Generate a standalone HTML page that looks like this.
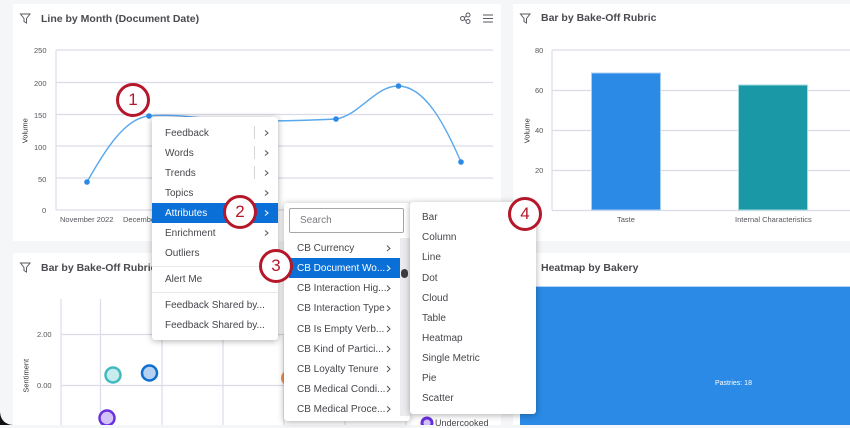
<!DOCTYPE html>
<html><head><meta charset="utf-8">
<style>
html,body{margin:0;padding:0}
body{width:850px;height:425px;overflow:hidden;background:#f5f6f8;position:relative;font-family:"Liberation Sans",sans-serif;color:#3f3f46}
#w{position:absolute;left:0;top:0;width:850px;height:425px;filter:blur(.35px)}
.card{position:absolute;background:#fff}
.t{position:absolute;white-space:nowrap;line-height:1}
.title{font-size:10.5px;font-weight:bold;color:#4a4a50;letter-spacing:0;margin-top:1px}
.ax{font-size:7.5px;color:#55555c;margin-top:1px}
.menu{position:absolute;background:#fff;border-radius:3px;box-shadow:0 1px 7px rgba(0,0,0,.32)}
.i{position:absolute;font-size:10px;color:#46464c;white-space:nowrap;line-height:1;margin-top:2px}
.blue{position:absolute;background:#0a6fd6}
.b{position:absolute;width:28px;height:28px;border:3px solid #b5172b;border-radius:50%;background:#fff;color:#b5172b;font-size:17px;line-height:28px;text-align:center}
svg{position:absolute;left:0;top:0}
</style></head><body><div id="w">
<div class="card" style="left:13px;top:4px;width:488px;height:237px"></div>
<div class="card" style="left:513px;top:4px;width:337px;height:237px"></div>
<div class="card" style="left:13px;top:253px;width:488px;height:172px"></div>
<div class="card" style="left:513px;top:253px;width:337px;height:172px"></div>
<svg width="850" height="425" viewBox="0 0 850 425" fill="none">
<g stroke="#dcdce9" stroke-width="1.2">
<path d="M56 50H493M56 82.500H493M56 114.500H493M56 146H493M56 178H493M56 210H493M56 50V210"/>
<path d="M552 50H850M552 90.500H850M552 130.500H850M552 170.500H850M552 210.500H850M552 50V210"/>
<path d="M61 334.500H501M61 385.500H501M61 299V425M100.500 299V425M162 334V425M223 334V425M284 334V425M345 334V425M406 334V425"/>
</g>
<path d="M87 182C105 150 125 118 149 116C180 113 210 121 260 121C290 121 315 120 336 119C360 115 375 86 398 86C425 86 445 125 461 162" stroke="#5aa8ee" stroke-width="1.4"/>
<g fill="#2a8ae6"><circle cx="87" cy="182" r="2.800"/><circle cx="149" cy="116" r="2.800"/><circle cx="336" cy="119" r="2.800"/><circle cx="398.500" cy="86" r="2.800"/><circle cx="461" cy="162" r="2.800"/></g>
<rect x="591.500" y="73" width="69" height="137" fill="#2a8ae6" stroke="#a8d0f5"/>
<rect x="738.500" y="85" width="69" height="125" fill="#1b98a6" stroke="#a5dbe0"/>
<circle cx="113" cy="375" r="7.500" fill="#c6ecec" stroke="#42b8c0" stroke-width="2.500"/>
<circle cx="149.500" cy="373" r="7.500" fill="#b5d2f2" stroke="#0f6fd0" stroke-width="2.500"/>
<circle cx="107" cy="418" r="7.500" fill="#d3c2f5" stroke="#6a2fe0" stroke-width="2.500"/>
<circle cx="289" cy="378" r="8" fill="#ee8f50"/>
<circle cx="427" cy="423" r="5" fill="#d3c2f5" stroke="#6a2fe0" stroke-width="3"/>
<g stroke="#5a5a60" stroke-width="1">
<path d="M20.500 14H30L26.500 18.500V23L24 21.500V18.500Z"/>
<path d="M520.500 14H530L526.500 18.500V23L524 21.500V18.500Z"/>
<path d="M20.500 263H30L26.500 267.500V272L24 270.500V267.500Z"/>
<circle cx="462.500" cy="18.500" r="2"/><circle cx="468" cy="15" r="2"/><circle cx="468" cy="21.500" r="2"/><path d="M464.300 17.500L466.200 16.400M464.300 19.500L466.200 20.600"/>
<path d="M483 15H493M483 18.500H493M483 22H493"/>
</g>
</svg>
<div class="t title" style="left:41px;top:13px">Line by Month (Document Date)</div>
<div class="t title" style="left:541px;top:12px">Bar by Bake-Off Rubric</div>
<div class="t title" style="left:41px;top:262px">Bar by Bake-Off Rubric</div>
<div class="t title" style="left:541px;top:262px">Heatmap by Bakery</div>
<div class="t ax" style="left:34px;top:46px">250</div><div class="t ax" style="left:34px;top:79px">200</div><div class="t ax" style="left:34px;top:111px">150</div><div class="t ax" style="left:34px;top:143px">100</div><div class="t ax" style="left:38px;top:175px">50</div><div class="t ax" style="left:42px;top:206px">0</div>
<div class="t ax" style="left:535px;top:46px">80</div><div class="t ax" style="left:535px;top:86px">60</div><div class="t ax" style="left:535px;top:126px">40</div><div class="t ax" style="left:535px;top:166px">20</div>
<div class="t ax" style="left:37px;top:330px">2.00</div><div class="t ax" style="left:37px;top:381px">0.00</div>
<div class="t ax" style="left:60px;top:215px">November 2022</div><div class="t ax" style="left:123px;top:215px">December 2022</div>
<div class="t ax" style="left:617px;top:215px">Taste</div><div class="t ax" style="left:735px;top:215px">Internal Characteristics</div>
<div class="t ax" style="left:7px;top:126px;width:36px;text-align:center;transform:rotate(-90deg);color:#333">Volume</div>
<div class="t ax" style="left:509px;top:126px;width:36px;text-align:center;transform:rotate(-90deg);color:#333">Volume</div>
<div class="t ax" style="left:6px;top:371px;width:40px;text-align:center;transform:rotate(-90deg);color:#333">Sentiment</div>
<div style="position:absolute;left:520px;top:286px;width:330px;height:139px;background:#2a8ae6;border-top:1px solid #b5d5f5;box-sizing:border-box"></div>
<div class="t" style="left:715px;top:380px;font-size:7px;color:#fff">Pastries: 18</div>
<div class="t" style="left:435px;top:419px;font-size:9px;color:#46464c">Undercooked</div>

<div class="menu" style="left:152px;top:117px;width:126px;height:223px"></div>
<div class="blue" style="left:152px;top:203px;width:126px;height:20px"></div>
<div class="i" style="left:165px;top:127px">Feedback</div><div class="i" style="left:165px;top:147px">Words</div><div class="i" style="left:165px;top:167px">Trends</div><div class="i" style="left:165px;top:187px">Topics</div>
<div class="i" style="left:165px;top:207px;color:#fff">Attributes</div><div class="i" style="left:165px;top:227px">Enrichment</div><div class="i" style="left:165px;top:247px">Outliers</div><div class="i" style="left:165px;top:273px">Alert Me</div><div class="i" style="left:165px;top:299px">Feedback Shared by...</div><div class="i" style="left:165px;top:319px">Feedback Shared by...</div>
<svg width="850" height="425" fill="none" stroke="#55555c" stroke-width="1">
<path d="M254.500 126V139M254.500 146V159M254.500 166V179" stroke="#d5d5da"/>
<path d="M152 266.500H278M152 292.500H278" stroke="#e8e8ec"/>
<path d="M265 130.500L268 133L265 135.500M265 150.500L268 153L265 155.500M265 170.500L268 173L265 175.500M265 190.500L268 193L265 195.500M265 230.500L268 233L265 235.500"/>
<path d="M265 210.500L268 213L265 215.500" stroke="#fff"/>
</svg>

<div class="menu" style="left:284px;top:203px;width:126px;height:218px"></div>
<div style="position:absolute;left:289px;top:208px;width:115px;height:25px;box-sizing:border-box;border:1px solid #a5a5aa;border-radius:2px;background:#fff"></div>
<div class="i" style="left:300px;top:214px;color:#7a7a80">Search</div>
<div style="position:absolute;left:400px;top:238px;width:10px;height:178px;background:#ececef"></div>
<div style="position:absolute;left:401px;top:269px;width:7px;height:9px;border-radius:4px;background:#3c3c40"></div>
<div class="blue" style="left:289px;top:258px;width:111px;height:20px"></div>
<div class="i" style="left:297px;top:242px">CB Currency</div><div class="i" style="left:297px;top:262px;color:#fff">CB Document Wo...</div><div class="i" style="left:297px;top:282px">CB Interaction Hig...</div><div class="i" style="left:297px;top:302px">CB Interaction Type</div><div class="i" style="left:297px;top:323px">CB Is Empty Verb...</div><div class="i" style="left:297px;top:343px">CB Kind of Partici...</div><div class="i" style="left:297px;top:363px">CB Loyalty Tenure</div><div class="i" style="left:297px;top:383px">CB Medical Condi...</div><div class="i" style="left:297px;top:403px">CB Medical Proce...</div>
<svg width="850" height="425" fill="none" stroke="#55555c" stroke-width="1">
<path d="M387 245.500L390 248.500L387 251M387 285.500L390 288.500L387 291M387 305.500L390 308.500L387 311M387 326L390 329L387 332M387 346L390 349L387 352M387 366L390 369L387 372M387 386L390 389L387 392M387 406.500L390 409L387 412"/>
<path d="M387 265.500L390 268.500L387 271" stroke="#fff"/>
</svg>

<div class="menu" style="left:410px;top:202px;width:126px;height:212px"></div>
<div class="i" style="left:422px;top:211px">Bar</div><div class="i" style="left:422px;top:231px">Column</div><div class="i" style="left:422px;top:251px">Line</div><div class="i" style="left:422px;top:272px">Dot</div><div class="i" style="left:422px;top:292px">Cloud</div><div class="i" style="left:422px;top:312px">Table</div><div class="i" style="left:422px;top:332px">Heatmap</div><div class="i" style="left:422px;top:352px">Single Metric</div><div class="i" style="left:422px;top:372px">Pie</div><div class="i" style="left:422px;top:392px">Scatter</div>

<div class="b" style="left:116px;top:83px">1</div>
<div class="b" style="left:223px;top:195px">2</div>
<div class="b" style="left:259px;top:249px">3</div>
<div class="b" style="left:508px;top:197px">4</div>
<svg width="850" height="425"><path d="M0 412Q1 424 13 425H0Z" fill="#111"/></svg>
</div></body></html>
